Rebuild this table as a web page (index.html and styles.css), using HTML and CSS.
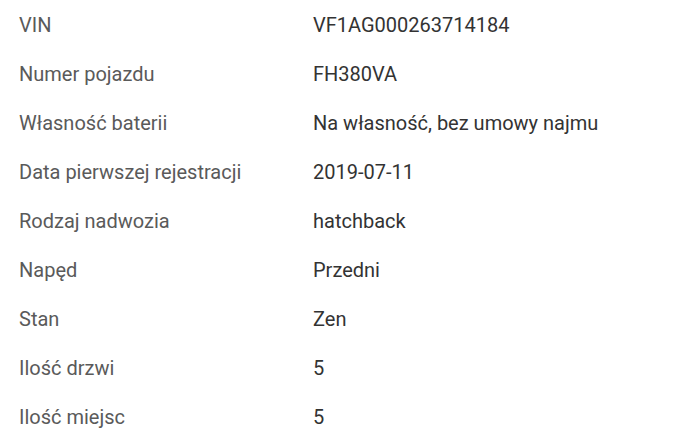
FILE: index.html
```html
<!DOCTYPE html>
<html lang="pl">
<head>
<meta charset="utf-8">
<link rel="stylesheet" href="styles.css">
</head>
<body>
<dl class="specs">
  <div class="row"><dt>VIN</dt><dd>VF1AG000263714184</dd></div>
  <div class="row"><dt>Numer pojazdu</dt><dd>FH380VA</dd></div>
  <div class="row"><dt>Własność baterii</dt><dd>Na własność, bez umowy najmu</dd></div>
  <div class="row"><dt>Data pierwszej rejestracji</dt><dd>2019-07-11</dd></div>
  <div class="row"><dt>Rodzaj nadwozia</dt><dd>hatchback</dd></div>
  <div class="row"><dt>Napęd</dt><dd>Przedni</dd></div>
  <div class="row"><dt>Stan</dt><dd>Zen</dd></div>
  <div class="row"><dt>Ilość drzwi</dt><dd>5</dd></div>
  <div class="row"><dt>Ilość miejsc</dt><dd>5</dd></div>
</dl>
</body>
</html>
```
FILE: styles.css
```css
html, body {
  margin: 0;
  padding: 0;
  background: #fff;
}
.specs {
  margin: 0;
  padding: 0 0 0 19px;
  font-family: Roboto, "Liberation Sans", sans-serif;
  font-size: 20px;
}
.row {
  display: grid;
  grid-template-columns: 294px 1fr;
  height: 49px;
  align-items: center;
}
dt {
  margin: 0;
  color: #5a5a5a;
}
dd {
  margin: 0;
  color: #333;
}
```
